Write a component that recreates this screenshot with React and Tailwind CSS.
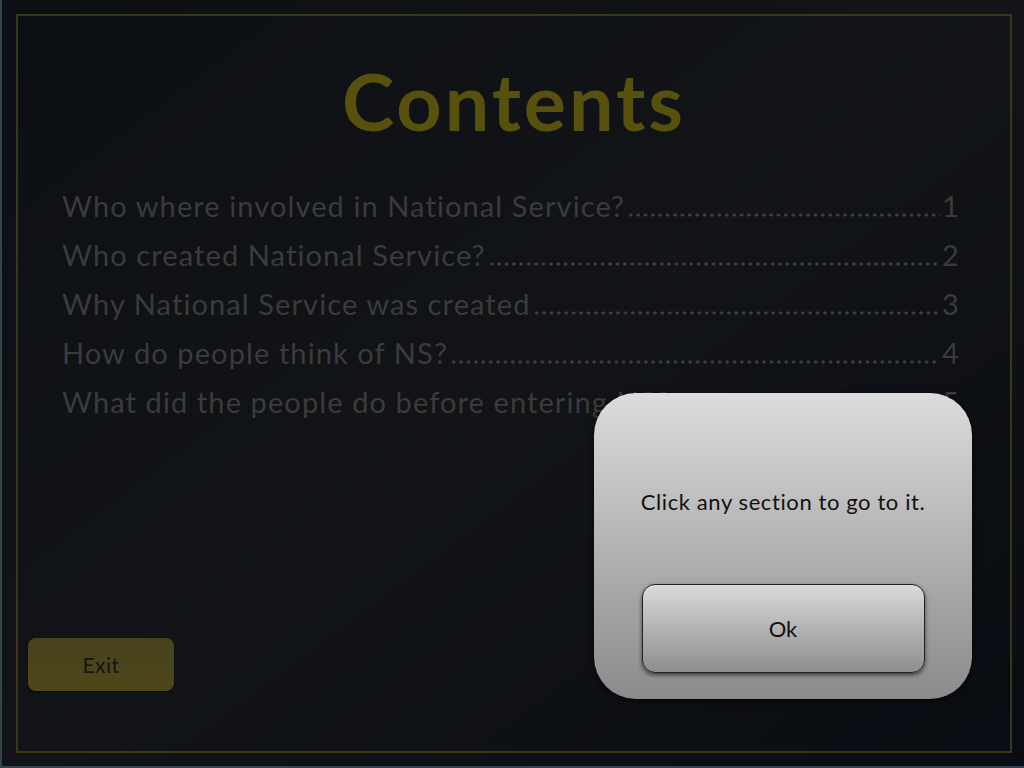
import React from 'react';

const sections = [
  { title: 'Who where involved in National Service?', page: 1 },
  { title: 'Who created National Service?', page: 2 },
  { title: 'Why National Service was created', page: 3 },
  { title: 'How do people think of NS?', page: 4 },
  { title: 'What did the people do before entering NS?', page: 5 },
];

const font = { fontFamily: 'Lato, "Open Sans", sans-serif' };

export default function App() {
  return (
    <div
      className="relative w-[1024px] h-[768px] overflow-hidden bg-gradient-to-br from-[#0c0f14] via-[#121417] to-[#090c12] border-l-2 border-b-2 border-[#34444f] pt-[14px] pl-[14px]"
      style={font}
    >
      {/* Gold frame */}
      <div className="w-[996px] h-[739px] border-2 border-[#3a3618] flex flex-col">
        <h1 className="text-center text-[79px] font-bold tracking-[3px] leading-none text-[#58510e] mt-[45px]">
          Contents
        </h1>

        <ul className="mt-[44px] pl-[44px] pr-[50px] flex flex-col">
          {sections.map((s) => (
            <li
              key={s.page}
              className="flex items-baseline h-[49px] text-[29px] tracking-[1.1px] text-[#3b3b3b] whitespace-nowrap cursor-pointer"
            >
              <span>{s.title}</span>
              <span className="flex-1 self-stretch mx-[2px] bg-[radial-gradient(circle,#3f3f3d_1.4px,transparent_1.8px)] bg-[length:7.4px_6px] bg-repeat-x bg-[position:0_28px]" />
              <span>{s.page}</span>
            </li>
          ))}
        </ul>

        <div className="mt-auto mb-[60px] ml-[10px]">
          <button className="w-[146px] h-[53px] rounded-[8px] bg-gradient-to-b from-[#47421e] to-[#4e4718] text-[#141414] text-[21px] tracking-[0.5px] shadow-[0_1px_2px_rgba(0,0,0,0.6)]">
            Exit
          </button>
        </div>
      </div>

      {/* Alert dialog */}
      <div className="absolute left-[592px] top-[393px] w-[378px] h-[306px] rounded-[42px] bg-gradient-to-b from-[#dcdcdc] to-[#8b8b8b] shadow-[0_2px_6px_rgba(0,0,0,0.7)] flex flex-col items-center">
        <p className="mt-[92px] text-[22px] tracking-[0.6px] text-[#111]">Click any section to go to it.</p>
        <button className="mt-[66px] w-[283px] h-[89px] rounded-[13px] border border-[#222] bg-gradient-to-b from-[#dadada] to-[#8e8e8e] shadow-[0_2px_4px_rgba(0,0,0,0.6)] text-[22px] text-[#111]">
          Ok
        </button>
      </div>
    </div>
  );
}
